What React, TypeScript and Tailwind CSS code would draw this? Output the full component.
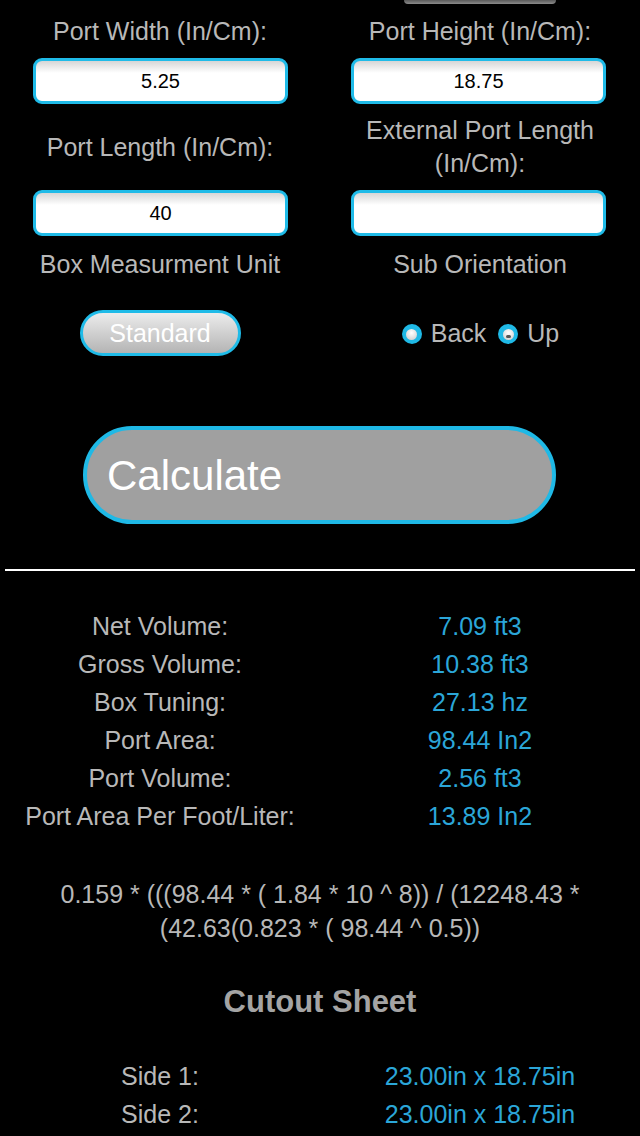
const RESULTS = [
  { label: 'Net Volume:',               value: '7.09 ft3'  },
  { label: 'Gross Volume:',             value: '10.38 ft3' },
  { label: 'Box Tuning:',               value: '27.13 hz'  },
  { label: 'Port Area:',                value: '98.44 In2' },
  { label: 'Port Volume:',              value: '2.56 ft3'  },
  { label: 'Port Area Per Foot/Liter:', value: '13.89 In2' },
]

const CUTOUTS = [
  { label: 'Side 1:', value: '23.00in x 18.75in' },
  { label: 'Side 2:', value: '23.00in x 18.75in' },
]

function Field({ value, right }: { value: string; right?: boolean }) {
  return (
    <div
      className={
        'w-[255px] h-[46px] rounded-[9px] border-[3px] border-[#1fbbe8] bg-[linear-gradient(#d6d6d6,#ffffff_30%,#ffffff)] flex items-center justify-center text-[20px] text-black ' +
        (right ? 'ml-[31px]' : 'ml-[33px]')
      }
    >
      {value}
    </div>
  )
}

function Radio({ selected }: { selected?: boolean }) {
  return (
    <span className="w-[20px] h-[20px] rounded-full bg-[#1fb9e6] flex items-center justify-center shrink-0">
      <span className="w-[11px] h-[11px] rounded-full bg-[radial-gradient(circle_at_50%_35%,#ffffff,#c8c8c8)] flex items-end justify-center">
        {selected && <span className="w-[5px] h-[3px] mb-[2px] rounded-full bg-[#555]" />}
      </span>
    </span>
  )
}

export default function App() {
  return (
    <div className="min-h-[1136px] bg-black overflow-hidden text-[25px] text-[#b8b8b8]" style={{ fontFamily: '"Liberation Sans", Arial, sans-serif' }}>

      {/* ── Inputs ───────────────────────────────────── */}
      <div className="grid grid-cols-2">
        <div />
        <div className="mx-auto w-[152px] h-[4px] rounded-b-[4px] bg-[linear-gradient(#5a5a5a,#8a8a8a)]" />
      </div>

      <div className="grid grid-cols-2 mt-[10px] text-center leading-[34px]">
        <p>Port Width (In/Cm):</p>
        <p>Port Height (In/Cm):</p>
      </div>
      <div className="grid grid-cols-2 mt-[10px]">
        <Field value="5.25" />
        <Field value="18.75" right />
      </div>

      <div className="grid grid-cols-2 items-center mt-[10px] text-center leading-[33px]">
        <p>Port Length (In/Cm):</p>
        <p>External Port Length<br />(In/Cm):</p>
      </div>
      <div className="grid grid-cols-2 mt-[10px]">
        <Field value="40" />
        <Field value="" right />
      </div>

      <div className="grid grid-cols-2 mt-[11px] text-center leading-[34px]">
        <p>Box Measurment Unit</p>
        <p>Sub Orientation</p>
      </div>
      <div className="grid grid-cols-2 items-center mt-[29px]">
        <button className="mx-auto w-[161px] h-[46px] rounded-full border-[3px] border-[#1fbbe8] bg-[linear-gradient(#ececec,#b4b4b4)] text-[25px] text-white leading-none">
          Standard
        </button>
        <div className="flex items-center justify-center text-[25px] mt-[2px] pl-[1px]">
          <Radio />
          <span className="ml-[9px] mr-[12px]">Back</span>
          <Radio selected />
          <span className="ml-[9px]">Up</span>
        </div>
      </div>

      {/* ── Calculate ────────────────────────────────── */}
      <div className="flex justify-center mt-[70px] pr-[1px]">
        <button className="w-[473px] h-[98px] rounded-full border-[4px] border-[#1fb9e6] bg-[#a0a0a0] text-left pl-[20px] text-[42px] text-white">
          Calculate
        </button>
      </div>

      <div className="mx-[5px] mt-[45px] h-[2px] bg-white" />

      {/* ── Results ──────────────────────────────────── */}
      <div className="mt-[36px] leading-[38px]">
        {RESULTS.map((r) => (
          <div key={r.label} className="grid grid-cols-2 text-center">
            <span>{r.label}</span>
            <span className="text-[#2ba6d8]">{r.value}</span>
          </div>
        ))}
      </div>

      <p className="mt-[42px] text-center leading-[34px] px-[40px]">
        0.159 * (((98.44 * ( 1.84 * 10 ^ 8)) / (12248.43 *<br />(42.63(0.823 * ( 98.44 ^ 0.5))
      </p>

      <h2 className="mt-[37px] text-center text-[31px] font-bold leading-[40px] text-[#a4a4a4]">Cutout Sheet</h2>

      <div className="mt-[35px] leading-[38px]">
        {CUTOUTS.map((c) => (
          <div key={c.label} className="grid grid-cols-2 text-center">
            <span>{c.label}</span>
            <span className="text-[#2ba6d8]">{c.value}</span>
          </div>
        ))}
      </div>
    </div>
  )
}
